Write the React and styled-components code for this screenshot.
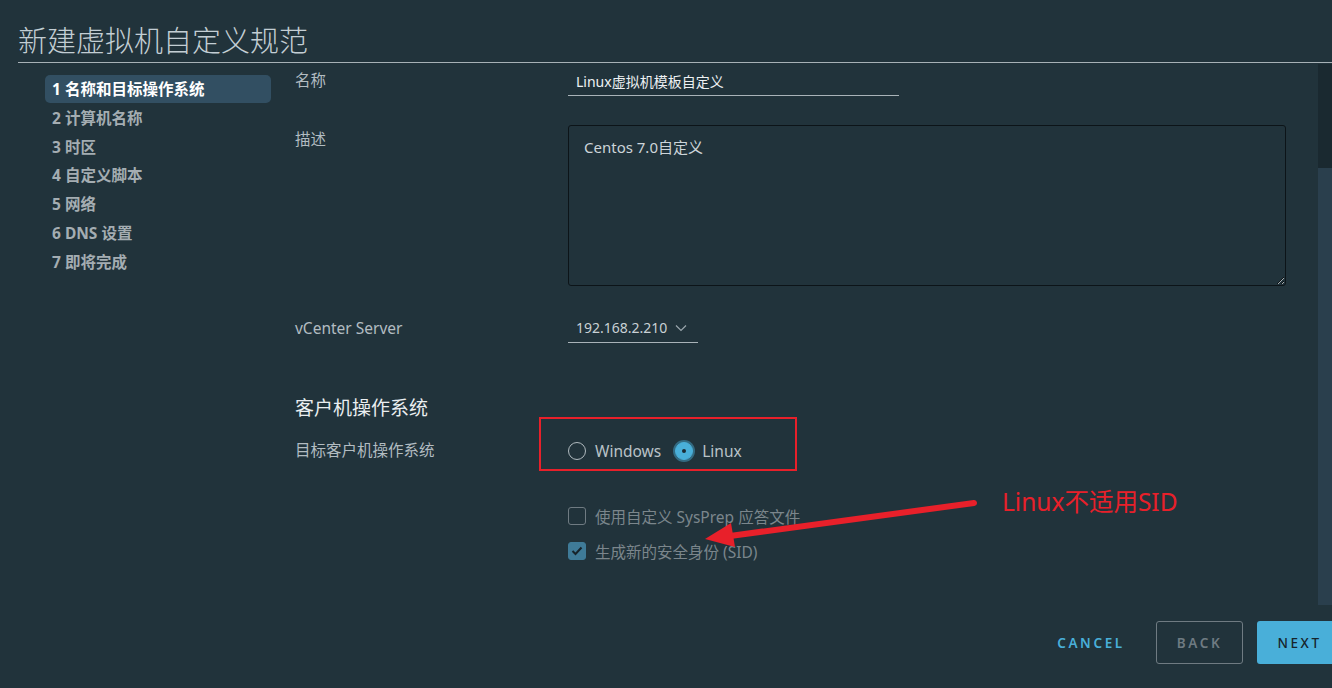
import React from 'react'
import styled, { createGlobalStyle } from 'styled-components';

const GlobalStyle = createGlobalStyle`
html, body {
  margin: 0;
  padding: 0;
  background: #21333b;
}
* {
  box-sizing: border-box;
}
`;

const steps = [
  '1 名称和目标操作系统',
  '2 计算机名称',
  '3 时区',
  '4 自定义脚本',
  '5 网络',
  '6 DNS 设置',
  '7 即将完成',
];

const App = () => {
  return (
    <Page>
      <GlobalStyle />
      <Header>
        <Title>新建虚拟机自定义规范</Title>
      </Header>
      <Main>
        <Nav>
          {steps.map((s, i) => (
            <NavItem key={s} active={i === 0}>{s}</NavItem>
          ))}
        </Nav>
        <Content>
          <Row>
            <Label>名称</Label>
            <TextInput>Linux虚拟机模板自定义</TextInput>
          </Row>
          <Row gap={29}>
            <Label top={3}>描述</Label>
            <TextArea defaultValue="Centos 7.0自定义" />
          </Row>
          <Row gap={31}>
            <Label>vCenter Server</Label>
            <Select>
              192.168.2.210
              <svg width="12" height="8" viewBox="0 0 12 8">
                <path d="M1 1.5 L6 6.5 L11 1.5" fill="none" stroke="#9aa6ad" strokeWidth="1.2" />
              </svg>
            </Select>
          </Row>
          <Heading>客户机操作系统</Heading>
          <Row gap={-1}>
            <Label top={22}>目标客户机操作系统</Label>
            <RadioBox>
              <RadioOption>
                <Radio />
                Windows
              </RadioOption>
              <RadioOption>
                <Radio checked />
                Linux
              </RadioOption>
            </RadioBox>
          </Row>
          <Row gap={35}>
            <Label />
            <CheckOption>
              <Checkbox />
              使用自定义 SysPrep 应答文件
            </CheckOption>
          </Row>
          <Row gap={15}>
            <Label />
            <CheckOption>
              <Checkbox checked>
                <svg width="12" height="10" viewBox="0 0 12 10">
                  <path d="M1.5 5 L4.5 8 L10.5 1.5" fill="none" stroke="#17242b" strokeWidth="2" />
                </svg>
              </Checkbox>
              生成新的安全身份 (SID)
            </CheckOption>
          </Row>
        </Content>
        <ScrollTrack>
          <ScrollThumb />
        </ScrollTrack>
      </Main>
      <Footer>
        <LinkButton>CANCEL</LinkButton>
        <OutlineButton>BACK</OutlineButton>
        <PrimaryButton>NEXT</PrimaryButton>
      </Footer>

      <Arrow width="290" height="70" viewBox="0 0 290 70">
        <line x1="270" y1="8" x2="26" y2="41" stroke="#e8202a" strokeWidth="6" strokeLinecap="round" />
        <polygon points="1,44 27,28 31,52" fill="#e8202a" />
      </Arrow>
      <Note>Linux不适用SID</Note>
    </Page>
  )
};

export default App;

const Page = styled.div`
position: relative;
width: 1332px;
height: 688px;
overflow: hidden;
background: #21333b;
display: flex;
flex-direction: column;
font-family: "Noto Sans", "Noto Sans CJK SC", sans-serif;
`;
const Header = styled.div`
margin-left: 18px;
padding: 24px 0 4px;
border-bottom: 1px solid #a7b1b6;
`;
const Title = styled.div`
font-size: 29px;
line-height: 34px;
font-weight: 300;
color: #c3ced4;
`;
const Main = styled.div`
height: 542px;
display: flex;
`;
const Nav = styled.div`
width: 226px;
margin-left: 45px;
padding-top: 12px;
display: flex;
flex-direction: column;
gap: 0.8px;
`;
const NavItem = styled.div`
height: 28px;
line-height: 28px;
padding-left: 7px;
border-radius: 5px;
font-size: 15.5px;
font-weight: 700;
color: ${p => p.active ? '#ffffff' : '#a4adb2'};
background: ${p => p.active ? '#324f62' : 'transparent'};
`;
const Content = styled.div`
flex: 1;
padding: 6px 32px 0 24px;
`;
const Row = styled.div`
display: flex;
align-items: flex-start;
margin-top: ${p => p.gap || 0}px;
`;
const Label = styled.div`
width: 273px;
flex-shrink: 0;
margin-top: ${p => p.top || 0}px;
font-size: 15.5px;
line-height: 22px;
color: #b2bcc1;
`;
const TextInput = styled.div`
width: 331px;
height: 27px;
padding: 2px 0 0 8px;
font-size: 14px;
line-height: 22px;
color: #eef1f3;
border-bottom: 1px solid #a9b3b8;
`;
const TextArea = styled.textarea`
width: 718px;
height: 161px;
padding: 10px 15px;
background: #21333b;
border: 1px solid #0c1418;
border-radius: 3px;
font-family: "Noto Sans", "Noto Sans CJK SC", sans-serif;
font-size: 15px;
line-height: 22px;
color: #cdd5d9;
resize: vertical;
outline: none;
color-scheme: dark;
`;
const Select = styled.div`
width: 130px;
height: 26px;
padding: 0 0 3px 8px;
display: flex;
align-items: center;
gap: 8px;
font-size: 14px;
line-height: 22px;
color: #c9d1d5;
border-bottom: 1px solid #a9b3b8;
`;
const Heading = styled.div`
margin-top: 55px;
font-size: 19px;
line-height: 20px;
color: #eaeef0;
`;
const RadioBox = styled.div`
width: 258px;
height: 54px;
margin-left: -29px;
padding: 22px 0 0 27px;
border: 2px solid #e8202a;
display: flex;
align-items: flex-start;
gap: 14px;
`;
const RadioOption = styled.div`
height: 20px;
display: flex;
align-items: center;
gap: 9px;
font-size: 15.5px;
color: #b9c2c7;
`;
const Radio = styled.span`
width: 18px;
height: 18px;
border-radius: 50%;
position: relative;
border: 1px solid ${p => p.checked ? '#49afd9' : '#b0babf'};
background: ${p => p.checked ? '#49afd9' : 'transparent'};
box-shadow: ${p => p.checked ? '0 0 0 2px rgba(73,175,217,0.45)' : 'none'};

&::after {
  content: '';
  display: ${p => p.checked ? 'block' : 'none'};
  position: absolute;
  left: 6px;
  top: 6px;
  width: 4px;
  height: 4px;
  border-radius: 50%;
  background: #1b2b33;
}
`;
const CheckOption = styled.div`
height: 20px;
display: flex;
align-items: center;
gap: 9px;
font-size: 15.5px;
color: #7b868c;
`;
const Checkbox = styled.span`
width: 18px;
height: 18px;
border-radius: 3px;
display: flex;
align-items: center;
justify-content: center;
border: 1px solid ${p => p.checked ? '#3f7b98' : '#6f7b82'};
background: ${p => p.checked ? '#3f7b98' : 'transparent'};
`;
const ScrollTrack = styled.div`
width: 14px;
margin-top: 1px;
display: flex;
flex-direction: column;
background: #1a2930;
`;
const ScrollThumb = styled.div`
margin-top: 104px;
flex: 1;
background: #2a3f4d;
`;
const Footer = styled.div`
flex: 1;
display: flex;
justify-content: flex-end;
align-items: flex-start;
padding-top: 16px;
margin-right: -10px;
`;
const ButtonBase = styled.div`
height: 43px;
display: flex;
align-items: center;
justify-content: center;
border-radius: 3px;
font-size: 13.5px;
font-weight: 500;
letter-spacing: 2.6px;
`;
const LinkButton = styled(ButtonBase)`
width: 92px;
color: #49afd9;
margin-right: 19px;
font-weight: 600;
`;
const OutlineButton = styled(ButtonBase)`
width: 87px;
color: #6f7b82;
border: 1px solid #6f7b82;
margin-right: 14px;
font-weight: 600;
`;
const PrimaryButton = styled(ButtonBase)`
width: 85px;
color: #17242b;
background: #49afd9;
`;
const Arrow = styled.svg`
position: absolute;
left: 704px;
top: 495px;
`;
const Note = styled.span`
position: absolute;
left: 1002px;
top: 485px;
font-size: 24.5px;
line-height: 34px;
color: #e8202a;
`;
